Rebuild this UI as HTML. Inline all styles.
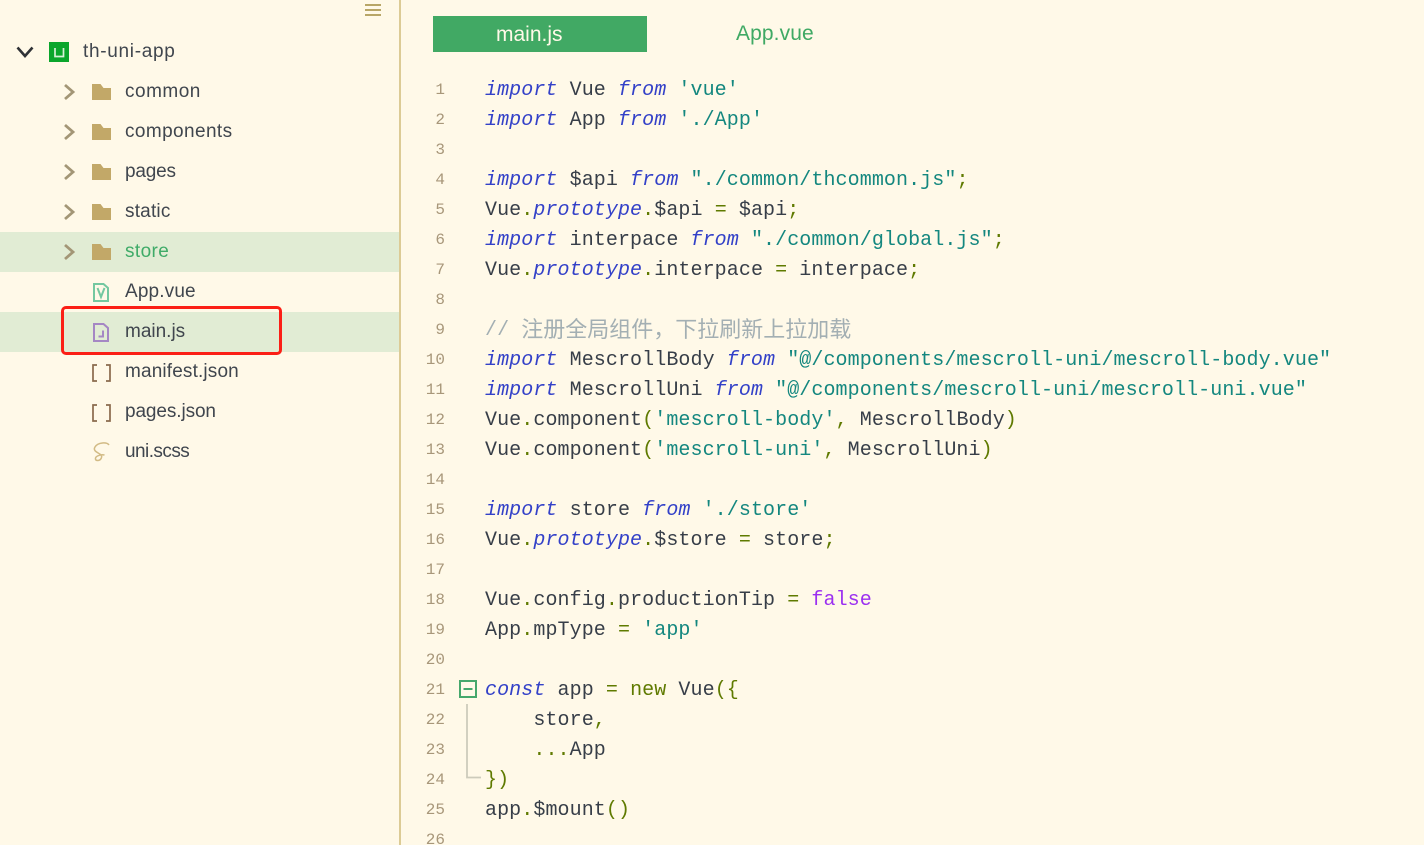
<!DOCTYPE html>
<html><head><meta charset="utf-8">
<style>
html,body{margin:0;padding:0;width:1424px;height:845px;overflow:hidden;background:#fff9e8}
#w{width:1424px;height:845px;background:#fff9e8;position:relative;overflow:hidden;font-family:"Liberation Sans","Noto Sans CJK SC",sans-serif;color:#3f4650}
.a{position:absolute}
.t{position:absolute;left:125px;font-size:19px;line-height:40px;height:40px;white-space:nowrap;color:#40464e}
.hl{position:absolute;left:0;width:399px;height:40px;background:#e1ecd4}
svg{position:absolute;overflow:visible}
.n{position:absolute;left:425px;width:20px;text-align:right;font:16px/30px "Liberation Mono",monospace;color:#a8977a;height:30px;margin-top:1px}
.c{position:absolute;left:485px;height:30px;font:20px/30px "Liberation Mono","Noto Sans CJK SC",monospace;letter-spacing:.085px;white-space:pre;color:#373e48;margin-top:2px}
i{color:#3341c8;font-style:italic}
s{text-decoration:none;color:#14877f}
b{font-weight:normal;color:#5f7a00}
u{text-decoration:none;color:#9b30f0}
em{font-style:normal;color:#a3afb3}
em span{font:22px/30px "Noto Sans CJK SC",sans-serif;letter-spacing:0;vertical-align:top;position:relative;top:-3px}
</style></head><body><div id="w">
<div class="a" style="left:399px;top:0;width:2px;height:845px;background:#dccb95"></div>
<svg style="left:365px;top:4px" width="16" height="12"><path d="M0 1h16M0 6h16M0 11h16" stroke="#a08a3c" stroke-width="1.5" fill="none"/></svg>

<svg style="left:16px;top:46px" width="18" height="14"><path d="M1.500 1.500L9 10L16.500 1.500" stroke="#2f3236" stroke-width="2.600" fill="none"/></svg>
<div class="a" style="left:49px;top:42px;width:20px;height:20px;background:#0ba62c"></div>
<svg style="left:49px;top:42px" width="20" height="20"><path d="M6 6v8.500h8.500V6" stroke="#d8f0d8" stroke-width="1.700" fill="none"/></svg>
<div class="t" style="left:83px;top:32px;letter-spacing:.7px">th-uni-app</div>

<div class="hl" style="top:232px"></div>
<div class="hl" style="top:312px"></div>

<svg style="left:63px;top:83px" width="12" height="18"><path d="M2 2L10 9L2 16" stroke="#a39676" stroke-width="2.800" fill="none"/></svg>
<svg style="left:63px;top:123px" width="12" height="18"><path d="M2 2L10 9L2 16" stroke="#a39676" stroke-width="2.800" fill="none"/></svg>
<svg style="left:63px;top:163px" width="12" height="18"><path d="M2 2L10 9L2 16" stroke="#a39676" stroke-width="2.800" fill="none"/></svg>
<svg style="left:63px;top:203px" width="12" height="18"><path d="M2 2L10 9L2 16" stroke="#a39676" stroke-width="2.800" fill="none"/></svg>
<svg style="left:63px;top:243px" width="12" height="18"><path d="M2 2L10 9L2 16" stroke="#a39676" stroke-width="2.800" fill="none"/></svg>

<svg style="left:92px;top:84px" width="19" height="16"><path d="M0 0h8.500l3 4H19v12H0z" fill="#c2a868"/></svg>
<svg style="left:92px;top:124px" width="19" height="16"><path d="M0 0h8.500l3 4H19v12H0z" fill="#c2a868"/></svg>
<svg style="left:92px;top:164px" width="19" height="16"><path d="M0 0h8.500l3 4H19v12H0z" fill="#c2a868"/></svg>
<svg style="left:92px;top:204px" width="19" height="16"><path d="M0 0h8.500l3 4H19v12H0z" fill="#c2a868"/></svg>
<svg style="left:92px;top:244px" width="19" height="16"><path d="M0 0h8.500l3 4H19v12H0z" fill="#c2a868"/></svg>

<div class="t" style="top:72px;letter-spacing:.5px">common</div>
<div class="t" style="top:112px;letter-spacing:.4px">components</div>
<div class="t" style="top:152px;letter-spacing:-.2px">pages</div>
<div class="t" style="top:192px;letter-spacing:.2px">static</div>
<div class="t" style="top:232px;color:#3fab68;letter-spacing:.4px">store</div>
<div class="t" style="top:272px;letter-spacing:.15px">App.vue</div>
<div class="t" style="top:312px">main.js</div>
<div class="t" style="top:352px;letter-spacing:.15px">manifest.json</div>
<div class="t" style="top:392px;letter-spacing:-.1px">pages.json</div>
<div class="t" style="top:432px;letter-spacing:-.55px">uni.scss</div>

<svg style="left:93px;top:283px" width="16" height="19"><path d="M1 1h9.500L15 5v13H1z" fill="none" stroke="#74c8a0" stroke-width="2"/><path d="M4.500 5L8 14l3.500-9" fill="none" stroke="#74c8a0" stroke-width="2"/></svg>
<svg style="left:93px;top:323px" width="16" height="19"><path d="M1 1h9.500L15 5v13H1z" fill="none" stroke="#a587c4" stroke-width="2"/><path d="M10 7.500V13.500H5.500" fill="none" stroke="#a587c4" stroke-width="2"/></svg>
<svg style="left:91px;top:364px" width="20" height="18"><path d="M6 1H2v16h4M15 1h4v16h-4" fill="none" stroke="#8a6a4c" stroke-width="1.700"/></svg>
<svg style="left:91px;top:404px" width="20" height="18"><path d="M6 1H2v16h4M15 1h4v16h-4" fill="none" stroke="#8a6a4c" stroke-width="1.700"/></svg>
<svg style="left:92px;top:442px" width="18" height="20"><path d="M17 3C15 0 6 0 3 5c-2.500 4 3 5.500 5.500 7.500 2.500 2 .5 6-3 6-2.500 0-3-3 0-4.500 2-1 5-1.500 7-1" fill="none" stroke="#d2bb85" stroke-width="1.500"/></svg>

<div class="a" style="left:61px;top:306px;width:215px;height:43px;border:3px solid #fb1f16;border-radius:5px"></div>

<div class="a" style="left:433px;top:16px;width:214px;height:36px;background:#41a964"></div>
<div class="a" style="left:496px;top:17px;font-size:21px;line-height:36px;color:#fff9e8">main.js</div>
<div class="a" style="left:736px;top:16px;font-size:21px;line-height:36px;color:#3fa964;letter-spacing:.1px">App.vue</div>

<div class="n" style="top:74px">1</div><div class="c" style="top:74px"><i>import</i> Vue <i>from</i> <s>'vue'</s></div>
<div class="n" style="top:104px">2</div><div class="c" style="top:104px"><i>import</i> App <i>from</i> <s>'./App'</s></div>
<div class="n" style="top:134px">3</div>
<div class="n" style="top:164px">4</div><div class="c" style="top:164px"><i>import</i> $api <i>from</i> <s>"./common/thcommon.js"</s><b>;</b></div>
<div class="n" style="top:194px">5</div><div class="c" style="top:194px">Vue<b>.</b><i>prototype</i><b>.</b>$api <b>=</b> $api<b>;</b></div>
<div class="n" style="top:224px">6</div><div class="c" style="top:224px"><i>import</i> interpace <i>from</i> <s>"./common/global.js"</s><b>;</b></div>
<div class="n" style="top:254px">7</div><div class="c" style="top:254px">Vue<b>.</b><i>prototype</i><b>.</b>interpace <b>=</b> interpace<b>;</b></div>
<div class="n" style="top:284px">8</div>
<div class="n" style="top:314px">9</div><div class="c" style="top:314px"><em>// <span>注册全局组件，下拉刷新上拉加载</span></em></div>
<div class="n" style="top:344px">10</div><div class="c" style="top:344px"><i>import</i> MescrollBody <i>from</i> <s>"@/components/mescroll-uni/mescroll-body.vue"</s></div>
<div class="n" style="top:374px">11</div><div class="c" style="top:374px"><i>import</i> MescrollUni <i>from</i> <s>"@/components/mescroll-uni/mescroll-uni.vue"</s></div>
<div class="n" style="top:404px">12</div><div class="c" style="top:404px">Vue<b>.</b>component<b>(</b><s>'mescroll-body'</s><b>,</b> MescrollBody<b>)</b></div>
<div class="n" style="top:434px">13</div><div class="c" style="top:434px">Vue<b>.</b>component<b>(</b><s>'mescroll-uni'</s><b>,</b> MescrollUni<b>)</b></div>
<div class="n" style="top:464px">14</div>
<div class="n" style="top:494px">15</div><div class="c" style="top:494px"><i>import</i> store <i>from</i> <s>'./store'</s></div>
<div class="n" style="top:524px">16</div><div class="c" style="top:524px">Vue<b>.</b><i>prototype</i><b>.</b>$store <b>=</b> store<b>;</b></div>
<div class="n" style="top:554px">17</div>
<div class="n" style="top:584px">18</div><div class="c" style="top:584px">Vue<b>.</b>config<b>.</b>productionTip <b>=</b> <u>false</u></div>
<div class="n" style="top:614px">19</div><div class="c" style="top:614px">App<b>.</b>mpType <b>=</b> <s>'app'</s></div>
<div class="n" style="top:644px">20</div>
<div class="n" style="top:674px">21</div><div class="c" style="top:674px"><i>const</i> app <b>=</b> <b>new</b> Vue<b>({</b></div>
<div class="n" style="top:704px">22</div><div class="c" style="top:704px">    store<b>,</b></div>
<div class="n" style="top:734px">23</div><div class="c" style="top:734px">    <b>...</b>App</div>
<div class="n" style="top:764px">24</div><div class="c" style="top:764px"><b>})</b></div>
<div class="n" style="top:794px">25</div><div class="c" style="top:794px">app<b>.</b>$mount<b>()</b></div>
<div class="n" style="top:824px">26</div>

<svg style="left:459px;top:680px" width="24" height="102"><rect x="1" y="1" width="16" height="16" fill="none" stroke="#46a86c" stroke-width="2"/><path d="M4.500 9h9" stroke="#46a86c" stroke-width="2"/><path d="M8 24v73.500h14" fill="none" stroke="#cdcbbb" stroke-width="1.800"/></svg>
</div></body></html>
